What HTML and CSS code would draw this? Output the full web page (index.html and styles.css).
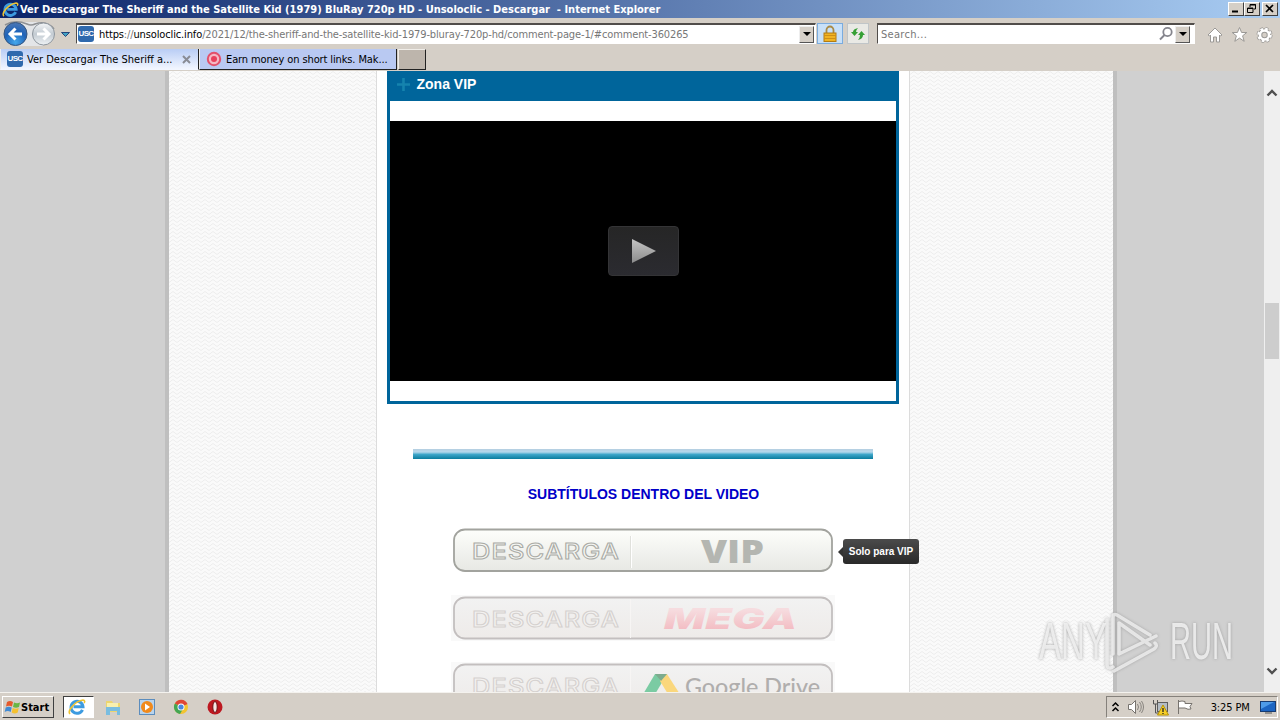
FILE: index.html
```html
<!DOCTYPE html>
<html lang="en">
<head>
  <meta charset="UTF-8" />
  <title>Ver Descargar The Sheriff and the Satellite Kid (1979) BluRay 720p HD</title>
  <link rel="stylesheet" href="styles.css">
</head>
<body>
  <svg class="defs" width="0" height="0">
    <defs>
      <symbol id="ie" viewBox="0 0 18 18">
        <path d="M14.5 11.8A6 6 0 1 1 15 8.8H5.5" fill="none" stroke="#3d9be0" stroke-width="3"/>
        <path d="M2 16C-1 13 7 3 15 2c2 0 2 2 1 3" fill="none" stroke="#efc331" stroke-width="1.6"/>
      </symbol>
      <linearGradient id="btnFill" x1="0" y1="0" x2="0" y2="1">
        <stop offset="0" stop-color="#fdfefb"/><stop offset="1" stop-color="#e7e8e4"/>
      </linearGradient>
      <linearGradient id="btnFade" x1="0" y1="0" x2="0" y2="1">
        <stop offset="0" stop-color="#f2f2f2"/><stop offset="1" stop-color="#eeebe9"/>
      </linearGradient>
      <linearGradient id="megaFill" x1="0" y1="0" x2="0" y2="1">
        <stop offset="0.25" stop-color="#f6dcdf"/><stop offset="1" stop-color="#f2b3ba"/>
      </linearGradient>
      <linearGradient id="playFill" x1="0" y1="0" x2="0" y2="1">
        <stop offset="0" stop-color="#c4c4c4"/><stop offset="1" stop-color="#8c8c8c"/>
      </linearGradient>
      <radialGradient id="navBlue" cx=".5" cy=".85" r=".8">
        <stop offset="0" stop-color="#45a8ec"/><stop offset=".6" stop-color="#1f63b8"/><stop offset="1" stop-color="#4775b5"/>
      </radialGradient>
      <linearGradient id="navGrey" x1="0" y1="0" x2="0" y2="1">
        <stop offset="0" stop-color="#f4f6f8"/><stop offset=".5" stop-color="#c3cbd2"/><stop offset="1" stop-color="#eef2f5"/>
      </linearGradient>
      <pattern id="zigzag" width="8" height="4" patternUnits="userSpaceOnUse">
        <path d="M0 3.500L4 .5l4 3" fill="none" stroke="#ededed"/>
      </pattern>
    </defs>
  </svg>

  <div class="titlebar">
    <svg width="17" height="17"><use href="#ie"/></svg>
    <span class="title">Ver Descargar The Sheriff and the Satellite Kid (1979) BluRay 720p HD - Unsoloclic - Descargar&nbsp; - Internet Explorer</span>
    <div class="win-buttons">
      <span class="win-btn"><svg width="13" height="11"><path d="M3 8.5h6" stroke="#000" stroke-width="2"/></svg></span>
      <span class="win-btn"><svg width="13" height="11"><path d="M5 4V1.500h5.500V6H9M5 2h6M2.500 5h5.500v4.500h-5.500zM2 5.500h6" fill="none" stroke="#000"/></svg></span>
      <span class="win-btn close"><svg width="13" height="11"><path d="M3 2l7 7M10 2l-7 7" stroke="#000" stroke-width="1.700"/></svg></span>
    </div>
  </div>

  <div class="toolbar">
    <svg class="nav" width="76" height="28">
      <path d="M15 2h28v24H15z" fill="#e3e5e8"/>
      <path d="M5 5q10-6 22-1 4 2 8 0 12-4 19 5" fill="none" stroke="#8f9194" stroke-width="1.500"/>
      <circle cx="15.500" cy="14" r="11.500" fill="url(#navBlue)" stroke="#35557f"/>
      <path d="M22 14H11M15.500 8.500L10 14l5.500 5.500" fill="none" stroke="#fff" stroke-width="3"/>
      <circle cx="43.500" cy="14" r="11" fill="url(#navGrey)" stroke="#8e969e"/>
      <path d="M37 14h11M43.500 8.500L49 14l-5.500 5.500" fill="none" stroke="#fff" stroke-width="3"/>
      <path d="M61.500 12.500h8l-4 4z" fill="#42a3c4" stroke="#24467c"/>
    </svg>
    <div class="address">
      <span class="usc">USC</span>
      <span class="url"><b>https</b>://<b>unsoloclic.info</b>/2021/12/the-sheriff-and-the-satellite-kid-1979-bluray-720p-hd/comment-page-1/#comment-360265</span>
      <span class="drop"></span>
    </div>
    <div class="tool lock">
      <svg width="14" height="18"><path d="M3.500 9V5a3.500 3.500 0 0 1 7 0v4" fill="none" stroke="#a98a46" stroke-width="1.800"/><rect x="1" y="8" width="12" height="8.500" fill="#f0b323" stroke="#b17b14"/><path d="M1 10.500h12M1 13.500h12" stroke="#cf8f17"/></svg>
    </div>
    <div class="tool">
      <svg width="16" height="16"><path d="M1 6h2q0-3 5-4-2 2-2 4h2L4.500 10zM8 9l3.500-4L15 9h-2q0 4-5 5 2-2 2-5z" fill="#35a035"/></svg>
    </div>
    <div class="search">
      <span>Search...</span>
      <svg width="16" height="16"><circle cx="9.500" cy="6" r="4.200" fill="none" stroke="#85858d" stroke-width="1.800"/><path d="M6.500 9L2 13.500" stroke="#85858d" stroke-width="2"/></svg>
      <span class="drop"></span>
    </div>
    <div class="commands">
      <svg width="16" height="18"><path d="M1 9l7-7 7 7-1.500 1-1-1v7H9.500v-5h-3v5h-3V9l-1 1z" fill="#fff" stroke="#9b9996"/></svg>
      <svg width="17" height="18"><path d="M8.500 1.500l2.100 5h5.200l-4.200 3.300 1.600 5.500-4.700-3.200-4.700 3.200 1.600-5.500L1.200 6.500h5.200z" fill="#fff" stroke="#9b9996"/></svg>
      <svg width="17" height="18"><circle cx="8.500" cy="9" r="6.300" fill="none" stroke="#9b9996" stroke-width="3.500" stroke-dasharray="2.800 2.150"/><circle cx="8.500" cy="9" r="4.500" fill="none" stroke="#9b9996" stroke-width="4.500"/><circle cx="8.500" cy="9" r="6" fill="none" stroke="#fff" stroke-width="2.500" stroke-dasharray="2.500 2.210"/><circle cx="8.500" cy="9" r="4.500" fill="none" stroke="#fff" stroke-width="2.500"/></svg>
    </div>
  </div>

  <div class="tabs">
    <div class="tab active">
      <span class="usc">USC</span>
      <span class="tab-text">Ver Descargar The Sheriff a...</span>
      <svg width="9" height="9"><path d="M1 1l7 7M8 1L1 8" stroke="#898c95" stroke-width="2"/></svg>
    </div>
    <div class="tab second">
      <svg width="16" height="16"><circle cx="8" cy="8" r="6.200" fill="#f5b8c4" stroke="#e3506b" stroke-width="2"/><circle cx="8" cy="8" r="3" fill="#e8405c"/></svg>
      <span class="tab-text">Earn money on short links. Mak...</span>
    </div>
    <div class="new-tab"></div>
  </div>

  <div class="viewport">
    <div class="wrapper">
      <svg class="side" width="207" height="621"><rect width="207" height="621" fill="url(#zigzag)"/></svg>
      <div class="content">
        <div class="vip-box">
          <div class="vip-title">
            <svg width="13" height="13"><path d="M6.500 0v13M0 6.500h13" stroke="#1583ae" stroke-width="2.600"/></svg>
            Zona VIP
          </div>
          <div class="video">
            <div class="play"><svg width="26" height="26"><path d="M1 1v24l24-12z" fill="url(#playFill)"/></svg></div>
          </div>
        </div>
        <div class="divider"></div>
        <div class="subs">SUBTÍTULOS DENTRO DEL VIDEO</div>
        <div class="download">
          <svg width="384" height="46">
            <rect x="3" y="1.500" width="378" height="41.500" rx="11" fill="url(#btnFill)" stroke="#a2a39e" stroke-width="1.800"/>
            <path d="M179.500 8v32" stroke="#e0e1dc"/><path d="M180.500 8v32" stroke="#fff"/>
            <text class="descarga" x="21" y="31" textLength="148" lengthAdjust="spacingAndGlyphs">DESCARGA</text>
            <text class="vip" x="250" y="35" textLength="63" lengthAdjust="spacingAndGlyphs">VIP</text>
          </svg>
          <div class="tooltip">Solo para VIP</div>
        </div>
        <div class="download">
          <svg class="faded" width="384" height="46">
            <rect x="3" y="2.500" width="378" height="41" rx="11" fill="url(#btnFade)" stroke="#c3bfbf" stroke-width="1.800"/>
            <path d="M179.500 4v39" stroke="#f7f5f4"/>
            <text class="descarga pale" x="21" y="31.500" textLength="148" lengthAdjust="spacingAndGlyphs">DESCARGA</text>
            <text class="mega" x="213" y="34" textLength="133" lengthAdjust="spacingAndGlyphs">MEGA</text>
          </svg>
        </div>
        <div class="download">
          <svg class="faded" width="384" height="46">
            <rect x="3" y="2.500" width="378" height="41" rx="11" fill="url(#btnFade)" stroke="#c3bfbf" stroke-width="1.800"/>
            <path d="M179.500 4v39" stroke="#f7f5f4"/>
            <text class="descarga pale" x="21" y="31.500" textLength="148" lengthAdjust="spacingAndGlyphs">DESCARGA</text>
            <path d="M204 12h12L200 39l-9-5z" fill="#7bcba3"/>
            <path d="M209 12h7l16 25h-12l-11-18z" fill="#fad77d"/>
            <path d="M204 12h12l-6 7z" fill="#7dac8e"/>
            <text class="drive" x="234" y="33" textLength="135" lengthAdjust="spacingAndGlyphs">Google Drive</text>
          </svg>
        </div>
      </div>
      <svg class="side" width="203" height="621"><rect width="203" height="621" fill="url(#zigzag)"/></svg>
    </div>
    <div class="scrollbar">
      <svg width="12" height="8"><path d="M1.500 6.500L6 2l4.500 4.500" fill="none" stroke="#505050" stroke-width="2.400"/></svg>
      <div class="thumb"></div>
      <svg width="12" height="8"><path d="M1.500 1.500L6 6l4.500-4.500" fill="none" stroke="#505050" stroke-width="2.400"/></svg>
    </div>
  </div>

  <svg class="watermark" width="210" height="72">
    <g>
      <text x="5" y="53" textLength="68" lengthAdjust="spacingAndGlyphs">ANY</text>
      <text x="136" y="53" textLength="63" lengthAdjust="spacingAndGlyphs">RUN</text>
      <path d="M116 29L83 9q-4-2-4 3v36M73 14v44q0 6 6 3M116 39L85 17v31l37-18M80 65l40-22q4-3 1-6" fill="none" stroke="#f3f3f3" stroke-opacity=".8" stroke-width="3.500" stroke-linejoin="round" stroke-linecap="round"/>
    </g>
  </svg>

  <div class="taskbar">
    <div class="start">
      <svg width="17" height="16"><path d="M3 3q3-2 6 0L8 7.500q-3-1.500-6 0z" fill="#e65a2c"/><path d="M10 3.500q3 1.500 6 0L15 8q-3 1.500-6 0z" fill="#69b643"/><path d="M1.700 8.500q3-1.500 6 0l-1 4.500q-3-2-6 0z" fill="#418bd4"/><path d="M8.700 9q3 1.500 6 0l-1 4.500q-3 2-6 0z" fill="#f5c12f"/></svg>
      <b>Start</b>
    </div>
    <div class="task-active"><svg width="18" height="18"><use href="#ie"/></svg></div>
    <div class="quick">
      <svg width="18" height="18"><path d="M2 3h6l1 2h7v9H2z" fill="#ecd56f"/><path d="M3 5h11v4H3z" fill="#f8f0ae"/><path d="M2 9h14v8h-3v-4H6v4H2z" fill="#79bde0"/></svg>
      <svg width="18" height="18"><rect x="1.500" y="1.500" width="15" height="15" fill="#b9d4ed" stroke="#5c8dbd"/><circle cx="9" cy="9" r="6" fill="#f18a1c"/><path d="M7 5.500v7l5-3.500z" fill="#fff"/></svg>
      <svg width="18" height="18"><circle cx="9" cy="9" r="7" fill="#f2c431"/><path d="M9 9L2.900 5.500A7 7 0 0 1 15.500 6z" fill="#df4636"/><path d="M9 9L2.900 5.500A7 7 0 0 0 8 16l3-5z" fill="#44a653"/><circle cx="9" cy="9" r="3.500" fill="#fff"/><circle cx="9" cy="9" r="2.600" fill="#4a87df"/></svg>
      <svg width="18" height="18"><circle cx="9" cy="9" r="7.500" fill="#bd1820"/><ellipse cx="9" cy="9" rx="2.200" ry="5.500" fill="#f5e6e4" stroke="#6b1014"/></svg>
    </div>
    <div class="tray">
      <svg width="9" height="12"><path d="M1.500 5L4.500 2l3 3M1.500 10l3-3 3 3" fill="none" stroke="#000" stroke-width="1.500"/></svg>
      <svg width="18" height="16"><path d="M1.500 5.500h3l4-4v13l-4-4h-3z" fill="#fff" stroke="#77736e"/><path d="M10.500 5q2 3 0 6M12.500 3q3.500 5 0 10M14.500 2q4 6 0 12" fill="none" stroke="#87837e"/></svg>
      <svg width="18" height="17"><rect x="5.500" y="3.500" width="10" height="9" fill="#b4bcc4" stroke="#5d5d5d"/><path d="M1.500 1v4h4V1M3.500 5v9h5" fill="none" stroke="#555"/><path d="M11 6l5.500 10h-11z" fill="#f6cf28" stroke="#b89300"/><path d="M11 9v4M11 14v1" stroke="#222" stroke-width="1.300"/></svg>
      <svg width="17" height="16"><path d="M1.500 1v14M2 2.500q3-1 6 0v2h7l-2 3 1 2.500q-3 1-6-1H2" fill="#fff" stroke="#77736e"/></svg>
      <span class="clock">3:25 PM</span>
      <svg width="16" height="14"><rect x=".5" y="1.500" width="15" height="10" fill="#1c65c2" stroke="#173b70"/><path d="M1 2h13L1 9z" fill="#4e9be8"/><path d="M5 13h7" stroke="#555"/></svg>
    </div>
  </div>
</body>
</html>
```
FILE: styles.css
```css
body {
  margin: 0;
  width: 1280px;
  height: 720px;
  overflow: hidden;
  display: flex;
  flex-direction: column;
  background: #d5cfc7;
  color: #000;
  font-family: "DejaVu Sans Condensed", "DejaVu Sans", sans-serif;
  font-stretch: condensed;
  font-size: 11px;
  white-space: nowrap;
}

.defs {
  position: absolute;
}

svg {
  flex-shrink: 0;
}

.titlebar {
  height: 18px;
  display: flex;
  align-items: center;
  padding: 0 2px;
  background: linear-gradient(to right, #0b2469, #a9cdf3);
  box-sizing: border-box;
}

.title {
  color: #fff;
  font-weight: bold;
  margin-left: 1px;
}

.win-buttons {
  display: flex;
  margin-left: auto;
}

.win-btn {
  width: 14px;
  height: 12px;
  background: #d5cfc7;
  border: 1px solid;
  border-color: #fff #404040 #404040 #fff;
}

.close {
  margin-left: 2px;
}

.toolbar {
  height: 31px;
  display: flex;
  align-items: center;
  box-sizing: border-box;
}

.address,
.search {
  height: 21px;
  display: flex;
  align-items: center;
  background: #fff;
  border: 1px solid #fff;
  border-top: 2px solid #514d4a;
  border-left: 1px solid #514d4a;
  box-sizing: border-box;
}

.address {
  width: 740px;
  padding-left: 1px;
}

.usc {
  width: 16px;
  height: 16px;
  flex-shrink: 0;
  border-radius: 3px;
  background: #2f69ad;
  color: #fff;
  font: bold 8px/16px "Liberation Sans", sans-serif;
  letter-spacing: -0.6px;
  text-align: center;
}

.url {
  color: #777;
  margin-left: 5px;
  letter-spacing: -0.13px;
}

.url b {
  color: #000;
  font-weight: normal;
}

.drop {
  width: 13px;
  height: 15px;
  margin-left: auto;
  display: flex;
  align-items: center;
  justify-content: center;
  background: #d5cfc7;
  border: 1px solid;
  border-color: #eee #555 #555 #eee;
}

.address .drop {
  margin-right: 1px;
}

.drop::before {
  content: "";
  border: 4px solid transparent;
  border-top-color: #000;
  border-bottom: 0;
}

.tool {
  width: 20px;
  height: 19px;
  margin-left: 4px;
  display: flex;
  align-items: center;
  justify-content: center;
  background: #e9e9e5;
  border: 1px solid #c0c5c8;
}

.lock {
  width: 24px;
  margin-left: 1px;
  background: #c8e0f8;
  border-color: #7aacdf;
}

.search {
  width: 318px;
  margin-left: 8px;
  padding: 0 4px 0 3px;
  color: #777;
  letter-spacing: 0.3px;
}

.search svg {
  margin-left: auto;
}

.search .drop {
  margin-left: 1px;
}

.commands {
  display: flex;
  gap: 8px;
  margin-left: 12px;
  padding-top: 3px;
}

.tabs {
  height: 22px;
  display: flex;
  box-sizing: border-box;
  padding-bottom: 1px;
}

.tab {
  width: 198px;
  display: flex;
  align-items: center;
  padding-left: 6px;
  background: #b9c9f2;
  border-right: 1px solid #222;
  border-bottom: 1px solid #222;
  border-left: 1px solid #eee;
  box-sizing: border-box;
}

.active {
  width: 199px;
  background: linear-gradient(#b9cdf5, #f2f6ff);
  border-bottom-color: #f2f6ff;
}

.tab-text {
  margin-left: 4px;
}

.second .tab-text {
  letter-spacing: -0.12px;
}

.active svg {
  margin-left: auto;
  margin-right: 7px;
}

.new-tab {
  width: 28px;
  margin-left: 1px;
  background: #bdb5ac;
  border: 1px solid #222;
  border-top-color: #f0ede8;
  border-left-color: #f0ede8;
  box-sizing: border-box;
}

.viewport {
  height: 621px;
  display: flex;
  overflow: hidden;
  background: #d0d0d0;
}

.wrapper {
  width: 944px;
  margin-left: 165px;
  margin-right: auto;
  border: solid #bfbfbf;
  border-width: 0 4px;
  display: flex;
  background: #fafafa;
}

.content {
  width: 532px;
  display: flex;
  flex-direction: column;
  align-items: center;
  background: #fff;
  border: solid #dcdcdc;
  border-width: 0 1px;
}

.vip-box {
  width: 506px;
  height: 330px;
  flex-shrink: 0;
  background: #fff;
  border: 3px solid #00659b;
  border-top: 0;
}

.vip-title {
  height: 30px;
  display: flex;
  align-items: center;
  gap: 6.5px;
  padding: 0 0 4px 7px;
  box-sizing: border-box;
  background: #00659b;
  color: #fff;
  font: bold 14px "Liberation Sans", sans-serif;
}

.video {
  height: 260px;
  margin-top: 20px;
  display: flex;
  align-items: center;
  justify-content: center;
  background: #000;
}

.play {
  width: 69px;
  height: 48px;
  margin-left: 1px;
  display: flex;
  align-items: center;
  justify-content: center;
  border: 1px solid #343436;
  border-radius: 4px;
  background: linear-gradient(#262626, #2b2b30);
}

.divider {
  width: 460px;
  height: 10px;
  margin-top: 45px;
  flex-shrink: 0;
  background: linear-gradient(#b5cee0, #b5d8ec 30%, #3da5c8 55%, #0b7c9e);
}

.subs {
  margin-top: 27px;
  margin-bottom: 26px;
  padding-left: 1px;
  color: #0000c8;
  font: bold 14px/16px "Liberation Sans", sans-serif;
}

.download {
  position: relative;
  height: 46px;
  margin-bottom: 21px;
  flex-shrink: 0;
}

.faded {
  background: #f9f9f9;
}

.descarga {
  font: 500 22px Inter, sans-serif;
  letter-spacing: 1px;
  fill: #f6f7f3;
  stroke: #aaaba6;
  stroke-width: 1px;
}

.pale {
  fill: #f3f1f0;
  stroke: #d5d1cf;
}

.vip {
  font: 800 31px "Open Sans", sans-serif;
  fill: #b4b6b1;
}

.mega {
  font: italic 900 29px Inter, sans-serif;
  fill: url(#megaFill);
}

.drive {
  font: 500 23px Lato, sans-serif;
  fill: #b0aead;
}

.tooltip {
  position: absolute;
  left: 392px;
  top: 11px;
  width: 76px;
  height: 25px;
  border-radius: 3px;
  background: linear-gradient(#4b4b4b, #292929);
  color: #fff;
  font: bold 10px/25px "Liberation Sans", sans-serif;
  text-align: center;
}

.tooltip::before {
  content: "";
  position: absolute;
  left: -5px;
  top: 8px;
  border: 5px solid transparent;
  border-right-color: #333;
  border-left: 0;
}

.scrollbar {
  width: 16px;
  display: flex;
  flex-direction: column;
  align-items: center;
  justify-content: space-between;
  padding: 18px 0 17px;
  box-sizing: border-box;
  background: #efefef;
}

.thumb {
  width: 14px;
  height: 56px;
  margin-top: -102px;
  background: #cdcdcd;
}

.watermark {
  position: absolute;
  left: 1034px;
  top: 606px;
  filter: drop-shadow(0 0 1.5px #999);
}

.watermark text {
  font: 51px "Liberation Sans", sans-serif;
  fill: #f3f3f3;
  fill-opacity: .85;
}

.taskbar {
  height: 28px;
  display: flex;
  align-items: center;
  padding: 1px 2px 0;
  box-sizing: border-box;
  border-top: 1px solid #f4f2ee;
}

.start {
  width: 52px;
  height: 22px;
  display: flex;
  align-items: center;
  padding-left: 1px;
  box-sizing: border-box;
  border: 1px solid;
  border-color: #fff #404040 #404040 #fff;
}

.task-active {
  width: 31px;
  height: 22px;
  margin-left: 9px;
  display: flex;
  align-items: center;
  justify-content: center;
  box-sizing: border-box;
  background: #fff;
  border: 1px solid;
  border-color: #404040 #fff #fff #404040;
}

.task-active svg {
  margin-right: 3px;
}

.quick {
  display: flex;
  gap: 16px;
  margin-left: 10px;
}

.tray {
  width: 172px;
  height: 22px;
  margin-left: auto;
  display: flex;
  align-items: center;
  justify-content: space-between;
  padding: 0 1px 0 4px;
  box-sizing: border-box;
  border: 1px solid;
  border-color: #85817b #fff #fff #85817b;
}

.clock {
  margin-left: 9px;
  margin-right: 3px;
  letter-spacing: -0.1px;
}
```
